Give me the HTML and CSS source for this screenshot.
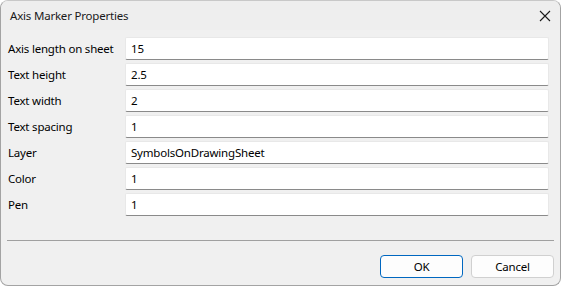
FILE: index.html
```html
<!DOCTYPE html>
<html lang="en">
<head>
    <meta charset="UTF-8">
    <title>Axis Marker Properties</title>
    <link rel="stylesheet" href="styles.css">
</head>
<body>
    <div class="window">
        <div class="titlebar">
            <span class="title">Axis Marker Properties</span>
            <span class="close">
                <svg width="12" height="12" viewBox="0 0 12 12">
                    <path d="M1 1 L11 11 M11 1 L1 11" stroke="#1a1a1a" stroke-width="1.1" fill="none"/>
                </svg>
            </span>
        </div>

        <div class="form">
            <label>Axis length on sheet</label>
            <div class="field">15</div>
            <label>Text height</label>
            <div class="field">2.5</div>
            <label>Text width</label>
            <div class="field">2</div>
            <label>Text spacing</label>
            <div class="field">1</div>
            <label>Layer</label>
            <div class="field">SymbolsOnDrawingSheet</div>
            <label>Color</label>
            <div class="field">1</div>
            <label>Pen</label>
            <div class="field">1</div>
        </div>

        <div class="separator"></div>

        <div class="buttons">
            <button class="btn default">OK</button>
            <button class="btn">Cancel</button>
        </div>
    </div>
</body>
</html>
```

FILE: styles.css
```css
*{
    padding:0;
    margin:0;
    box-sizing: border-box;
}
body{
    background-color: #ffffff;
    font-family: "Noto Sans", "Liberation Sans", sans-serif;
    font-size: 11.5px;
    letter-spacing: -0.2px;
    color: #000;
}
.window{
    width: 561px;
    height: 286px;
    border: 1px solid #a3a3a3;
    border-top-color: #c8c8c8;
    border-radius: 8px;
    background-color: #f0f0f0;
    overflow: hidden;
    display: flex;
    flex-direction: column;
}
.titlebar{
    height: 29px;
    display: flex;
    align-items: center;
    justify-content: space-between;
    padding-left: 9px;
    padding-right: 8px;
    background-color: #eeeeee;
}
.title{
    color: #1a1a1a;
}
.close{
    display: flex;
    width: 14px;
    height: 14px;
    align-items: center;
    justify-content: center;
}
.form{
    display: grid;
    grid-template-columns: 117px 1fr;
    row-gap: 3px;
    padding: 7px 11px 0 7px;
}
.form label{
    display: flex;
    align-items: center;
    height: 23px;
}
.field{
    height: 23px;
    display: flex;
    align-items: center;
    padding-left: 5px;
    background-color: #fff;
    border: 1px solid #e8e8e8;
    border-bottom-color: #8a8a8a;
    border-radius: 2px;
}
.separator{
    margin: 24px 6px 0 6px;
    height: 1px;
    background-color: #a0a0a0;
}
.buttons{
    display: flex;
    justify-content: flex-end;
    gap: 8px;
    padding: 14px 6px 0 0;
}
.btn{
    width: 83px;
    height: 23px;
    font-family: inherit;
    font-size: inherit;
    letter-spacing: inherit;
    color: #000;
    background-color: #fdfdfd;
    border: 1px solid #d0d0d0;
    border-radius: 4px;
}
.btn.default{
    border-color: #0067c0;
}
```
